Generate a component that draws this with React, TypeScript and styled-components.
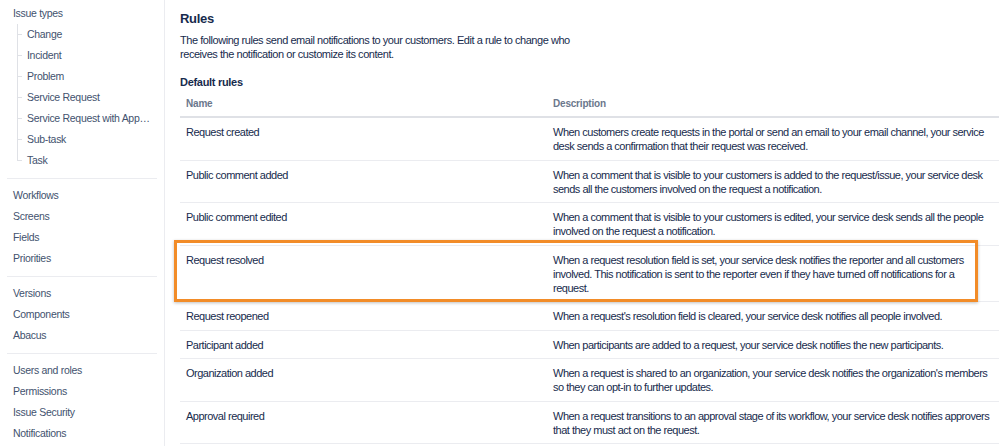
import React from 'react';
import styled, { createGlobalStyle } from 'styled-components';

const GlobalStyle = createGlobalStyle`
  html, body {
    margin: 0;
    padding: 0;
    background: #ffffff;
  }

  body {
    font-family: 'Liberation Sans', Arial, sans-serif;
    font-size: 11px;
    color: #172b4d;
    overflow: hidden;
  }
`;

type Rule = {
  name: string;
  lines: string[];
  highlighted?: boolean;
};

const issueTypes = [
  'Change',
  'Incident',
  'Problem',
  'Service Request',
  'Service Request with Approvals',
  'Sub-task',
  'Task',
];

const navGroups = [
  ['Workflows', 'Screens', 'Fields', 'Priorities'],
  ['Versions', 'Components', 'Abacus'],
  ['Users and roles', 'Permissions', 'Issue Security', 'Notifications'],
];

const rules: Rule[] = [
  {
    name: 'Request created',
    lines: [
      'When customers create requests in the portal or send an email to your email channel, your service',
      'desk sends a confirmation that their request was received.',
    ],
  },
  {
    name: 'Public comment added',
    lines: [
      'When a comment that is visible to your customers is added to the request/issue, your service desk',
      'sends all the customers involved on the request a notification.',
    ],
  },
  {
    name: 'Public comment edited',
    lines: [
      'When a comment that is visible to your customers is edited, your service desk sends all the people',
      'involved on the request a notification.',
    ],
  },
  {
    name: 'Request resolved',
    highlighted: true,
    lines: [
      'When a request resolution field is set, your service desk notifies the reporter and all customers',
      'involved. This notification is sent to the reporter even if they have turned off notifications for a',
      'request.',
    ],
  },
  {
    name: 'Request reopened',
    lines: ["When a request's resolution field is cleared, your service desk notifies all people involved."],
  },
  {
    name: 'Participant added',
    lines: ['When participants are added to a request, your service desk notifies the new participants.'],
  },
  {
    name: 'Organization added',
    lines: [
      "When a request is shared to an organization, your service desk notifies the organization's members",
      'so they can opt-in to further updates.',
    ],
  },
  {
    name: 'Approval required',
    lines: [
      'When a request transitions to an approval stage of its workflow, your service desk notifies approvers',
      'that they must act on the request.',
    ],
  },
];

const App = () => {
  return (
    <>
      <GlobalStyle />
      <Page>
        <Sidebar>
          <NavItem>Issue types</NavItem>
          <SubList>
            {issueTypes.map((type, i) => (
              <SubItem key={type} $last={i === issueTypes.length - 1}>
                {type}
              </SubItem>
            ))}
          </SubList>
          {navGroups.map((group, i) => (
            <React.Fragment key={i}>
              <Divider />
              {group.map((item) => (
                <NavItem key={item}>{item}</NavItem>
              ))}
            </React.Fragment>
          ))}
        </Sidebar>

        <Main>
          <Title>Rules</Title>
          <Intro>
            The following rules send email notifications to your customers. Edit a rule to change who
            <br />
            receives the notification or customize its content.
          </Intro>
          <SubTitle>Default rules</SubTitle>
          <Table>
            <colgroup>
              <col style={{ width: 367 }} />
              <col />
            </colgroup>
            <thead>
              <tr>
                <HeadCell>Name</HeadCell>
                <HeadCell>Description</HeadCell>
              </tr>
            </thead>
            <tbody>
              {rules.map((rule) => (
                <Row key={rule.name}>
                  <NameCell>
                    {rule.highlighted && <Highlight />}
                    {rule.name}
                  </NameCell>
                  <DescCell>
                    {rule.lines.map((line, i) => (
                      <React.Fragment key={i}>
                        {i > 0 && <br />}
                        {line}
                      </React.Fragment>
                    ))}
                  </DescCell>
                </Row>
              ))}
            </tbody>
          </Table>
        </Main>
      </Page>
    </>
  );
};

const Page = styled.div`
  display: flex;
  width: 999px;
  height: 446px;
  overflow: hidden;
`;

const Sidebar = styled.nav`
  flex: 0 0 165px;
  width: 165px;
  min-width: 0;
  box-sizing: border-box;
  padding: 3px 0 0;
  border-right: 1px solid #ebecf0;
  overflow: hidden;
  color: #42526e;
  font-size: 10.5px;
  letter-spacing: -0.3px;
`;

const NavItem = styled.div`
  height: 21px;
  line-height: 21px;
  padding-left: 13px;
  white-space: nowrap;
`;

const SubList = styled.div`
  display: flex;
  flex-direction: column;
  padding-left: 17px;
`;

const SubItem = styled.div<{ $last: boolean }>`
  position: relative;
  height: 21px;
  line-height: 21px;
  padding-left: 10px;
  padding-right: 12px;
  white-space: nowrap;
  overflow: hidden;
  text-overflow: ellipsis;

  &::before {
    content: '';
    position: absolute;
    left: 0;
    top: 0;
    width: 1px;
    height: ${({ $last }) => ($last ? '11px' : '21px')};
    background: #dfe1e6;
  }

  &::after {
    content: '';
    position: absolute;
    left: 1px;
    top: 10px;
    width: 4px;
    height: 1px;
    background: #dfe1e6;
  }
`;

const Divider = styled.hr`
  height: 1px;
  margin: 7px 7px 6px;
  border: 0;
  background: #ebecf0;
`;

const Main = styled.main`
  flex: 1;
  min-width: 0;
  padding: 10px 0 0 15px;
`;

const Title = styled.h2`
  margin: 0;
  font-size: 13px;
  line-height: 18px;
  font-weight: 700;
  letter-spacing: -0.3px;
`;

const Intro = styled.p`
  margin: 5px 0 0;
  line-height: 14px;
  letter-spacing: -0.45px;
`;

const SubTitle = styled.h3`
  margin: 14px 0 0;
  font-size: 11px;
  line-height: 14px;
  font-weight: 700;
  letter-spacing: -0.3px;
`;

const Table = styled.table`
  width: calc(100% + 20px);
  table-layout: fixed;
  border-collapse: collapse;
  letter-spacing: -0.5px;
`;

const HeadCell = styled.th`
  padding: 8px 6px 5px;
  border-bottom: 2px solid #dfe1e6;
  color: #6b778c;
  font-size: 10px;
  line-height: 14px;
  font-weight: 700;
  text-align: left;
  letter-spacing: -0.2px;
`;

const Row = styled.tr`
  border-bottom: 1px solid #ebecf0;
`;

const NameCell = styled.td`
  position: relative;
  padding: 7px 6px 6.5px;
  line-height: 14px;
  vertical-align: top;
  white-space: nowrap;
`;

const DescCell = styled.td`
  padding: 7px 6px 6.5px;
  line-height: 14px;
  vertical-align: top;
  white-space: nowrap;
`;

const Highlight = styled.span`
  position: absolute;
  left: -6px;
  top: -6px;
  bottom: -1px;
  width: 804px;
  box-sizing: border-box;
  border: 3px solid #f28c28;
  box-shadow: 0 1px 3px rgba(0, 0, 0, 0.25);
  pointer-events: none;
`;

export default App;
